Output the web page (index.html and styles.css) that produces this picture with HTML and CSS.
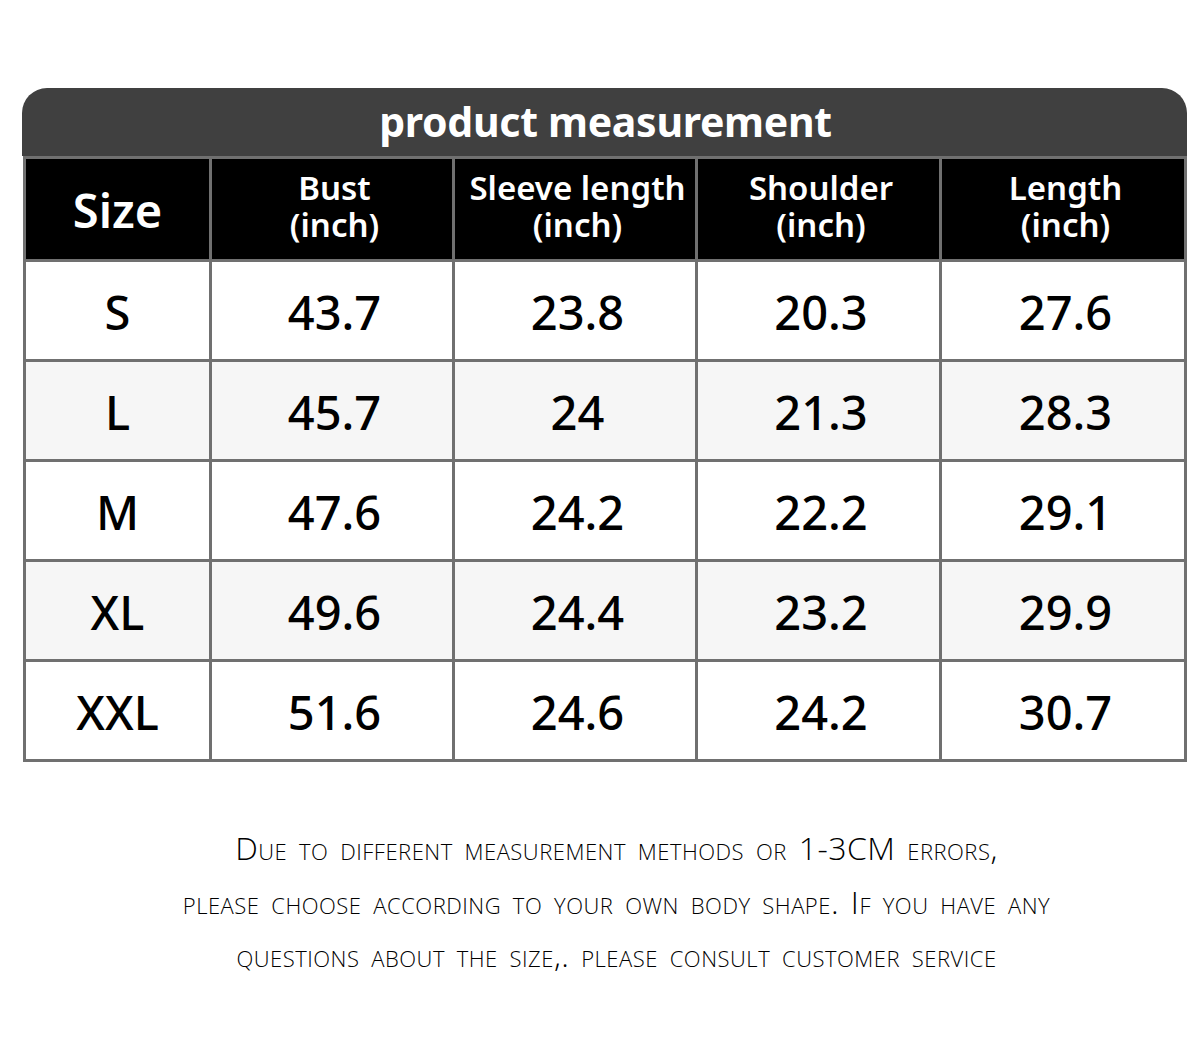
FILE: index.html
```html
<!DOCTYPE html>
<html>
<head>
<meta charset="utf-8">
<link rel="stylesheet" href="styles.css">
</head>
<body>
<div class="page">
  <div class="title">product measurement</div>
  <div class="grid">
    <div class="cell head big">Size</div>
    <div class="cell head val">Bust<br>(inch)</div>
    <div class="cell head val">Sleeve length<br>(inch)</div>
    <div class="cell head val">Shoulder<br>(inch)</div>
    <div class="cell head val">Length<br>(inch)</div>

    <div class="cell">S</div><div class="cell val">43.7</div><div class="cell val">23.8</div><div class="cell val">20.3</div><div class="cell val">27.6</div>
    <div class="cell alt">L</div><div class="cell alt val">45.7</div><div class="cell alt val">24</div><div class="cell alt val">21.3</div><div class="cell alt val">28.3</div>
    <div class="cell">M</div><div class="cell val">47.6</div><div class="cell val">24.2</div><div class="cell val">22.2</div><div class="cell val">29.1</div>
    <div class="cell alt">XL</div><div class="cell alt val">49.6</div><div class="cell alt val">24.4</div><div class="cell alt val">23.2</div><div class="cell alt val">29.9</div>
    <div class="cell">XXL</div><div class="cell val">51.6</div><div class="cell val">24.6</div><div class="cell val">24.2</div><div class="cell val">30.7</div>
  </div>
  <div class="note">
    <p>Due to different measurement methods or <span class="num">1-3CM</span> errors,</p>
    <p>please choose according to your own body shape. If you have any</p>
    <p>questions about the size,. please consult customer service</p>
  </div>
</div>
</body>
</html>
```

FILE: styles.css
```css
html, body {
  margin: 0;
  padding: 0;
  background: #ffffff;
}
body {
  font-family: "Noto Sans", "Open Sans", sans-serif;
  color: #000;
}
.page {
  width: 1165px;
  margin-left: 22px;
  padding-top: 88px;
}
.title {
  height: 68px;
  background: #404040;
  border-radius: 25px 25px 0 0;
  color: #fff;
  font-weight: 700;
  font-size: 41px;
  line-height: 66px;
  text-align: center;
  letter-spacing: -0.3px;
  padding-left: 2px;
}
.grid {
  margin-left: 1px;
  width: 1164px;
  box-sizing: border-box;
  display: grid;
  grid-template-columns: 183px 240px 240px 241px 242px;
  grid-template-rows: 100px repeat(5, 97px);
  gap: 3px;
  padding: 3px;
  background: #707070;
}
.cell {
  background: #ffffff;
  display: flex;
  align-items: center;
  justify-content: center;
  text-align: center;
  font-size: 47px;
  font-weight: 500;
  padding-top: 3px;
  box-sizing: border-box;
}
.cell.val {
  padding-left: 5px;
}
.cell.alt {
  background: #f6f6f6;
}
.cell.head {
  background: #000;
  color: #fff;
  font-size: 33px;
  font-weight: 600;
  line-height: 37px;
  padding-top: 0;
  padding-bottom: 6px;
}
.cell.head.big {
  font-size: 47px;
  padding-top: 2px;
  padding-bottom: 0;
}
.note {
  margin-top: 59px;
  padding-left: 24px;
  text-align: center;
  font-family: "Open Sans", "Noto Sans", sans-serif;
  font-weight: 300;
  font-variant: small-caps;
  font-size: 32px;
  letter-spacing: 0.5px;
  word-spacing: 3px;
  color: #000;
}
.note p {
  margin: 0;
  line-height: 53.5px;
}
```
